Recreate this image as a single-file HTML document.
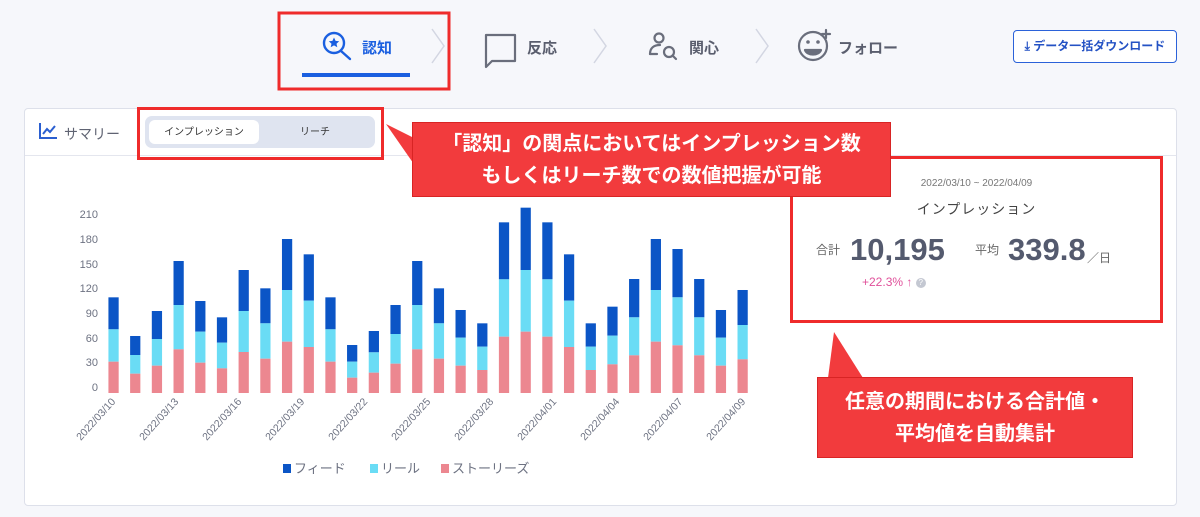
<!DOCTYPE html>
<html><head><meta charset="utf-8">
<style>
*{margin:0;padding:0;box-sizing:border-box}
body{width:1200px;height:517px;background:#f6f7fb;position:relative;overflow:hidden;font-family:"Liberation Sans","Noto Sans CJK JP",sans-serif;}
.a{position:absolute}
.nav{font-size:15px;font-weight:bold;color:#5a5e6e}
.callout{background:#f23b3d;border:1px solid #d82424;color:#fff;font-weight:bold;font-size:20px;line-height:32px;text-align:center}
</style></head><body>
<svg class="a" style="left:0;top:0" width="1200" height="100">
 <g fill="none" stroke="#1a5fe0" stroke-width="2.4" stroke-linecap="round">
  <circle cx="334" cy="43" r="10"/><line x1="341" y1="51" x2="350" y2="59"/>
 </g>
 <path d="M334 37.5l1.6 3.4 3.6.4-2.7 2.4.8 3.6-3.3-1.9-3.3 1.9.8-3.6-2.7-2.4 3.6-.4z" fill="#1a5fe0"/>
 <rect x="302" y="73" width="108" height="4" fill="#1a5fe0"/>
 <g fill="none" stroke="#d3d6e2" stroke-width="1.5">
  <path d="M432 29l12 17-12 17"/><path d="M594 29l12 17-12 17"/><path d="M756 29l12 17-12 17"/>
 </g>
 <g fill="none" stroke="#6a6e7c" stroke-width="2.2" stroke-linejoin="round" stroke-linecap="round">
  <path d="M486 35h29v26h-23l-6 6z"/>
  <circle cx="659" cy="38" r="4.5"/><path d="M650 54c0-6 4-9 10-9"/><path d="M650 54h7"/>
  <circle cx="669" cy="52" r="5"/><line x1="672.5" y1="55.5" x2="676" y2="59"/>
  <circle cx="813" cy="46" r="14"/><path d="M805 50c2 6 14 6 16 0z" fill="#6a6e7c"/>
  <line x1="826" y1="30" x2="826" y2="38"/><line x1="822" y1="34" x2="830" y2="34"/>
 </g>
 <circle cx="808" cy="42" r="1.8" fill="#6a6e7c"/><circle cx="818" cy="42" r="1.8" fill="#6a6e7c"/>
 <rect x="279" y="13" width="170" height="76" fill="none" stroke="#ef2b2b" stroke-width="3"/>
</svg>
<div class="a nav" style="left:362px;top:37px;color:#1a5fe0">認知</div>
<div class="a nav" style="left:527px;top:37px">反応</div>
<div class="a nav" style="left:689px;top:37px">関心</div>
<div class="a nav" style="left:838px;top:37px">フォロー</div>
<div class="a" style="left:1013px;top:30px;width:164px;height:33px;border:1px solid #2b62d9;border-radius:4px;background:#fff;color:#2452c4;font-size:12px;font-weight:bold;line-height:31px;text-align:center">⤓ データ一括ダウンロード</div>

<div class="a" style="left:24px;top:108px;width:1153px;height:398px;background:#fff;border:1px solid #dde0ea;border-radius:4px"></div>
<div class="a" style="left:25px;top:155px;width:1151px;height:1px;background:#e4e6ee"></div>
<svg class="a" style="left:38px;top:122px" width="20" height="18"><path d="M2 1v15h17" fill="none" stroke="#2b5fd0" stroke-width="2"/><path d="M5 12l4-5 3 3 5-6" fill="none" stroke="#2b5fd0" stroke-width="2"/></svg>
<div class="a" style="left:64px;top:124px;font-size:14px;color:#5f6372">サマリー</div>
<div class="a" style="left:145px;top:116px;width:230px;height:32px;background:#dfe4f0;border-radius:7px"></div>
<div class="a" style="left:149px;top:120px;width:110px;height:24px;background:#fff;border-radius:6px;font-size:10px;line-height:26px;text-align:center;color:#333">インプレッション</div>
<div class="a" style="left:270px;top:120px;width:90px;height:24px;font-size:10px;line-height:26px;text-align:center;color:#333">リーチ</div>
<div class="a" style="left:137px;top:107px;width:247px;height:53px;border:3px solid #ef2b2b"></div>

<svg class="a" style="left:0;top:0" width="1200" height="517">
 <g font-size="11" fill="#6d7282" text-anchor="end" font-family="Liberation Sans,sans-serif">
  <text x="98" y="218">210</text><text x="98" y="243">180</text><text x="98" y="268">150</text><text x="98" y="292">120</text><text x="98" y="317">90</text><text x="98" y="342">60</text><text x="98" y="366">30</text><text x="98" y="391">0</text>
 </g>
 <g id="bars" transform="translate(40,190) scale(0.4655,0.33333)"></g>
 <g font-size="10.5" fill="#6d7282" text-anchor="end" font-family="Liberation Sans,sans-serif" id="xl"></g>
 <rect x="283" y="464" width="8" height="9" fill="#0b55c6"/><text x="294" y="473" font-size="13" fill="#6d7282">フィード</text>
 <rect x="370" y="464" width="8" height="9" fill="#6adcf5"/><text x="381" y="473" font-size="13" fill="#6d7282">リール</text>
 <rect x="441" y="464" width="8" height="9" fill="#ec8790"/><text x="452" y="473" font-size="13" fill="#6d7282">ストーリーズ</text>
</svg>

<div class="a" style="left:790px;top:156px;width:373px;height:167px;border:3px solid #ef2b2b"></div>
<div class="a" style="left:790px;top:178px;width:373px;text-align:center;font-size:10px;color:#777">2022/03/10 ~ 2022/04/09</div>
<div class="a" style="left:790px;top:199px;width:373px;text-align:center;font-size:14px;color:#444;letter-spacing:1px">インプレッション</div>
<div class="a" style="left:816px;top:241px;font-size:12px;color:#666">合計</div>
<div class="a" style="left:850px;top:232px;font-size:31px;font-weight:bold;color:#545a6e">10,195</div>
<div class="a" style="left:975px;top:241px;font-size:12px;color:#666">平均</div>
<div class="a" style="left:1008px;top:232px;font-size:31px;font-weight:bold;color:#545a6e">339.8</div>
<div class="a" style="left:1087px;top:249px;font-size:12px;color:#666">／日</div>
<div class="a" style="left:862px;top:275px;font-size:12px;color:#e0509a">+22.3% ↑ <span style="display:inline-block;width:10px;height:10px;border-radius:5px;background:#c4c8d2;color:#fff;font-size:8px;line-height:10px;text-align:center;vertical-align:1px">?</span></div>

<svg class="a" style="left:0;top:0" width="1200" height="517">
 <path d="M386 124L418 140V170z" fill="#f23b3d"/>
 <path d="M834 332L863 378H828z" fill="#f23b3d"/>
</svg>
<div class="a callout" style="left:412px;top:122px;width:479px;height:75px;padding-top:5px">「認知」の関点においてはインプレッション数<br>もしくはリーチ数での数値把握が可能</div>
<div class="a callout" style="left:817px;top:377px;width:316px;height:81px;padding-top:8px">任意の期間における合計値・<br>平均値を自動集計</div>

<script>
var d=[[322,418,515],[438,495,551],[363,447,527],[213,345,478],[333,425,518],[382,458,535],[240,363,486],[295,400,506],[147,300,455],[193,332,471],[322,418,515],[465,515,563],[423,487,548],[345,432,521],[213,345,478],[295,400,506],[360,443,527],[400,470,540],[97,268,440],[53,240,425],[97,268,440],[193,332,471],[400,470,540],[350,437,523],[267,382,496],[147,300,455],[177,322,466],[267,382,496],[360,443,527],[300,405,508]];
var s='';d.forEach(function(b,i){var x=158+46.6*i-11;
s+='<rect x="'+x+'" y="'+b[0]+'" width="22" height="'+(b[1]-b[0])+'" fill="#0b55c6"/>';
s+='<rect x="'+x+'" y="'+b[1]+'" width="22" height="'+(b[2]-b[1])+'" fill="#6adcf5"/>';
s+='<rect x="'+x+'" y="'+b[2]+'" width="22" height="'+(609-b[2])+'" fill="#ec8790"/>';});
document.getElementById('bars').innerHTML=s;
var L=['03/10','03/13','03/16','03/19','03/22','03/25','03/28','04/01','04/04','04/07','04/09'];var t='';
L.forEach(function(l,i){var x=116+63*i,y=402;t+='<text x="'+x+'" y="'+y+'" transform="rotate(-48 '+x+' '+y+')">2022/'+l+'</text>';});
document.getElementById('xl').innerHTML=t;
</script>
</body></html>
